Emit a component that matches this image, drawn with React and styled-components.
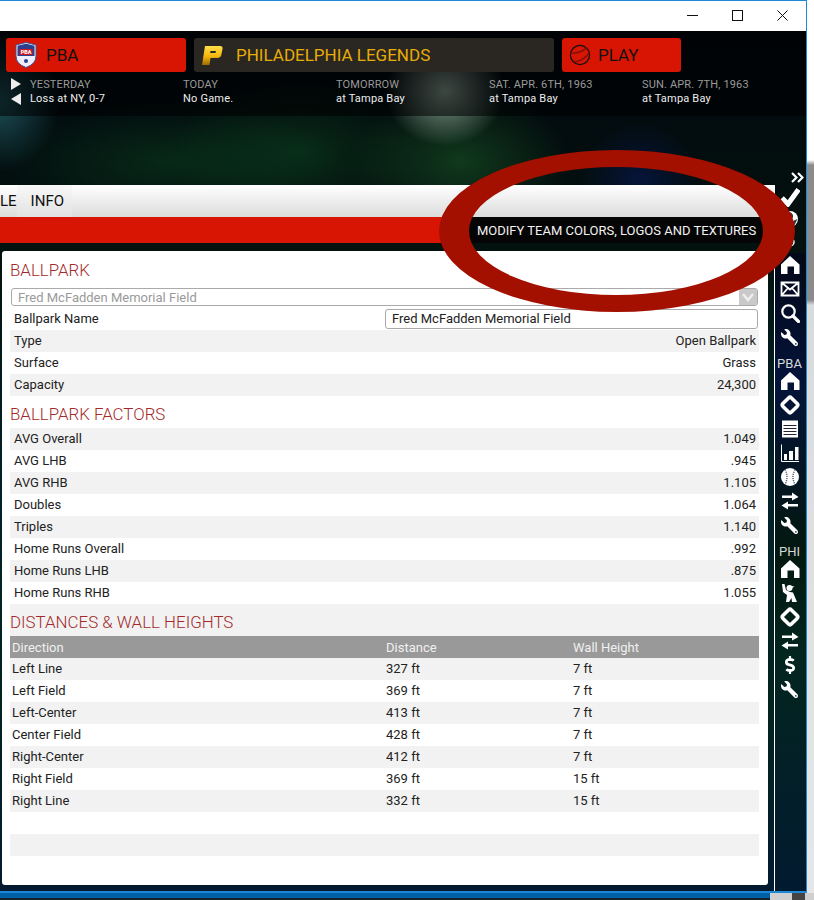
import styled, {createGlobalStyle} from 'styled-components';
import {FaWrench, FaDollarSign} from 'react-icons/fa';

const GlobalStyle = createGlobalStyle`
  html, body {
    margin: 0;
    padding: 0;
    background: #e4e4e4;
  }
  body {
    font-family: Roboto, "Liberation Sans", sans-serif;
  }
`;

const dates = [
    {label: 'YESTERDAY', value: 'Loss at NY, 0-7'},
    {label: 'TODAY', value: 'No Game.'},
    {label: 'TOMORROW', value: 'at Tampa Bay'},
    {label: 'SAT. APR. 6TH, 1963', value: 'at Tampa Bay'},
    {label: 'SUN. APR. 7TH, 1963', value: 'at Tampa Bay'},
];

const ballparkRows = [
    ['Type', 'Open Ballpark'],
    ['Surface', 'Grass'],
    ['Capacity', '24,300'],
];

const factorRows = [
    ['AVG Overall', '1.049'],
    ['AVG LHB', '.945'],
    ['AVG RHB', '1.105'],
    ['Doubles', '1.064'],
    ['Triples', '1.140'],
    ['Home Runs Overall', '.992'],
    ['Home Runs LHB', '.875'],
    ['Home Runs RHB', '1.055'],
];

const distanceRows = [
    ['Left Line', '327 ft', '7 ft'],
    ['Left Field', '369 ft', '7 ft'],
    ['Left-Center', '413 ft', '7 ft'],
    ['Center Field', '428 ft', '7 ft'],
    ['Right-Center', '412 ft', '7 ft'],
    ['Right Field', '369 ft', '15 ft'],
    ['Right Line', '332 ft', '15 ft'],
];

const Icon = ({children}) => <svg width="20" height="20" viewBox="0 0 20 20">{children}</svg>;

const HomeIcon = () => (
    <Icon><path d="M10 1 L19.5 9.5 V19 H14 V11.5 H7.5 V19 H1 V9.5 Z" fill="#fff" /></Icon>
);
const MailIcon = () => (
    <Icon>
        <path d="M1.5 3.5 H18.5 V16.5 H1.5 Z M1.5 3.5 L10 10.5 L18.5 3.5 M1.5 16.5 L8 9 M18.5 16.5 L12 9" fill="none" stroke="#fff" strokeWidth="1.8" />
    </Icon>
);
const SearchIcon = () => (
    <Icon>
        <circle cx="8.5" cy="8.5" r="6.2" fill="none" stroke="#fff" strokeWidth="2.2" />
        <path d="M13 13 L18.5 18.5" stroke="#fff" strokeWidth="3.2" strokeLinecap="round" />
    </Icon>
);
const CheckIcon = () => (
    <Icon><path d="M2 11 L8 17 L18.5 2.5" fill="none" stroke="#fff" strokeWidth="5" /></Icon>
);
const DiamondIcon = () => (
    <Icon>
        <rect x="4" y="4" width="12" height="12" rx="2" fill="none" stroke="#fff" strokeWidth="3.6" transform="rotate(45 10 10)" />
    </Icon>
);
const ListIcon = () => (
    <Icon>
        <rect x="2" y="1.5" width="16" height="17" fill="#fff" />
        <path d="M3.5 6.5 H16.5 M3.5 9.5 H16.5 M3.5 12.5 H16.5 M3.5 15.5 H16.5" stroke="#223" strokeWidth="1" />
    </Icon>
);
const ChartIcon = () => (
    <Icon>
        <path d="M1.5 1.5 V18.5 H19" fill="none" stroke="#fff" strokeWidth="1" />
        <path d="M4 11 H7 V17 H4 Z M9 8 H13 V17 H9 Z M15 4 H18.5 V17 H15 Z" fill="#fff" />
    </Icon>
);
const BallIcon = () => (
    <Icon>
        <circle cx="10" cy="10" r="9" fill="#fff" />
        <path d="M5 2.5 Q9 10 5 17.5 M15 2.5 Q11 10 15 17.5" fill="none" stroke="#556" strokeWidth="1.4" strokeDasharray="1.2 1" />
    </Icon>
);
const ArrowsIcon = () => (
    <Icon>
        <path d="M2 4.5 H12 V1.5 L18.5 6 L12 9.5 V7 H2 Z M18 13 H8 V10.5 L1.5 14.5 L8 18.5 V15.5 H18 Z" fill="#fff" />
    </Icon>
);
const PersonIcon = () => (
    <Icon>
        <circle cx="9.5" cy="5" r="3" fill="#fff" />
        <path d="M8 2.5 L14.5 3.5 L12 5 Z M2 1 L4.5 1 L6 7 L10 9 L13 9.5 L17 19 H12 L11.5 15 L9 19 H6 L7 12 L3 9 Z" fill="#fff" />
    </Icon>
);
const GlobeIcon = () => (
    <Icon>
        <circle cx="10" cy="10" r="8" fill="#fff" />
        <path d="M10 3 Q15 6 12 10 Q9 12 8 8 Z M13 12 L17.5 10 L14 17 Z" fill="#333" />
    </Icon>
);
const RingIcon = () => (
    <Icon><circle cx="10" cy="10" r="4" fill="none" stroke="#fff" strokeWidth="1.5" /></Icon>
);
const ChevronsIcon = () => (
    <svg width="13" height="11" viewBox="0 0 13 11">
        <path d="M1 1 L5.5 5.5 L1 10 M7 1 L11.5 5.5 L7 10" fill="none" stroke="#fff" strokeWidth="2.2" />
    </svg>
);

const LeagueCrest = () => (
    <svg width="22" height="26" viewBox="0 0 22 26">
        <path d="M11 .5 L21 3 V14 Q21 22 11 25.5 Q1 22 1 14 V3 Z" fill="#eef" stroke="#45558f" strokeWidth="1" />
        <path d="M2.5 3.8 L11 1.8 L19.5 3.8 V14 H2.5 Z" fill="#2c3f8c" />
        <rect x="4.5" y="7" width="13" height="6" fill="#cf1a22" />
        <text x="11" y="12" textAnchor="middle" fontFamily="Roboto" fontWeight="900" fontSize="5.4" fill="#fff">PBA</text>
        <circle cx="11" cy="19" r="2" fill="#2c3f8c" />
    </svg>
);

const TeamLogo = () => (
    <svg width="22" height="21" viewBox="0 0 22 21">
        <defs>
            <linearGradient id="teamGold" x1="0" y1="0" x2="0" y2="1">
                <stop offset="0" stopColor="#ffe04a" />
                <stop offset=".55" stopColor="#f5b50c" />
                <stop offset="1" stopColor="#9a6a06" />
            </linearGradient>
        </defs>
        <path d="M4 1 H19 Q22 1 21.5 4 L20.5 9 Q20 13 16 13 H9.5 L8.5 20 H1 Z M9.5 6 L9.2 8 H14.5 L15 6 Z" fill="url(#teamGold)" fillRule="evenodd" />
    </svg>
);

const PlayBall = () => (
    <svg width="22" height="22" viewBox="0 0 22 22">
        <circle cx="11" cy="11" r="9.6" fill="none" stroke="#111" strokeWidth="1.2" />
        <path d="M1.5 9 Q11 10 18 3.5 M5 18 Q14 17 20 9.5" fill="none" stroke="#7a1008" strokeWidth="1.3" />
    </svg>
);

const WindowIcon = ({kind}) => (
    <svg width="11" height="11" viewBox="0 0 11 11">
        {kind === 'min' && <path d="M0 5.5 H11" stroke="#111" />}
        {kind === 'max' && <rect x=".5" y=".5" width="10" height="10" fill="none" stroke="#111" />}
        {kind === 'close' && <path d="M.5 .5 L10.5 10.5 M10.5 .5 L.5 10.5" stroke="#111" />}
    </svg>
);

const SideIcons = ({items}) => items.map((item, i) => <SideSlot key={i}>{item}</SideSlot>);

export default function App() {
    return (
        <Page>
            <GlobalStyle />
            <TopArea>
                <Window>
                    <TitleBar>
                        <WindowButton><WindowIcon kind="min" /></WindowButton>
                        <WindowButton><WindowIcon kind="max" /></WindowButton>
                        <WindowButton><WindowIcon kind="close" /></WindowButton>
                    </TitleBar>
                    <Banner>
                        <HeaderPanel>
                            <MenuRow>
                                <MenuButton $width={180} $icon={40}>
                                    <LeagueCrest />
                                    <span>PBA</span>
                                </MenuButton>
                                <TeamButton><TeamLogo /><span>PHILADELPHIA LEGENDS</span></TeamButton>
                                <MenuButton $width={119} $icon={36}>
                                    <PlayBall />
                                    <span>PLAY</span>
                                </MenuButton>
                            </MenuRow>
                            <DateStrip>
                                <Pager>
                                    <PagerNext />
                                    <PagerPrev />
                                </Pager>
                                {dates.map((d) => (
                                    <DateCell key={d.label}>
                                        <DateLabel>{d.label}</DateLabel>
                                        <DateValue>{d.value}</DateValue>
                                    </DateCell>
                                ))}
                            </DateStrip>
                        </HeaderPanel>
                    </Banner>
                    <Body>
                        <Main>
                            <NavBar>
                                <NavTab>LE</NavTab>
                                <NavTab $active>INFO</NavTab>
                            </NavBar>
                            <RedBar>
                                <Tooltip>MODIFY TEAM COLORS, LOGOS AND TEXTURES</Tooltip>
                            </RedBar>
                            <Panel>
                                <Heading $first>BALLPARK</Heading>
                                <FakeSelect>
                                    Fred McFadden Memorial Field
                                    <SelectArrow>
                                        <svg width="12" height="9" viewBox="0 0 12 9">
                                            <path d="M1 1 L6 7 L11 1" fill="none" stroke="#eee" strokeWidth="2.5" />
                                        </svg>
                                    </SelectArrow>
                                </FakeSelect>
                                <Row>
                                    <span>Ballpark Name</span>
                                    <NameInput>Fred McFadden Memorial Field</NameInput>
                                </Row>
                                {ballparkRows.map(([k, v], i) => (
                                    <Row key={k} $shaded={i % 2 === 0}>
                                        <span>{k}</span>
                                        <span>{v}</span>
                                    </Row>
                                ))}
                                <Heading>BALLPARK FACTORS</Heading>
                                {factorRows.map(([k, v], i) => (
                                    <Row key={k} $shaded={i % 2 === 0}>
                                        <span>{k}</span>
                                        <span>{v}</span>
                                    </Row>
                                ))}
                                <Heading $shaded>DISTANCES &amp; WALL HEIGHTS</Heading>
                                <TableHead>
                                    <span>Direction</span>
                                    <span>Distance</span>
                                    <span>Wall Height</span>
                                </TableHead>
                                {distanceRows.map(([a, b, c], i) => (
                                    <TableRow key={a} $shaded={i % 2 === 0}>
                                        <span>{a}</span>
                                        <span>{b}</span>
                                        <span>{c}</span>
                                    </TableRow>
                                ))}
                                <TableRow />
                                <TableRow $shaded />
                            </Panel>
                        </Main>
                        <Sidebar>
                            <SideTop>
                                <SideSlot $h={20} $end><ChevronsIcon /></SideSlot>
                                <SideSlot $h={20}><CheckIcon /></SideSlot>
                                <SideSlot $h={23}><GlobeIcon /></SideSlot>
                                <SideSlot $h={23}><RingIcon /></SideSlot>
                            </SideTop>
                            <SideRest>
                                <SideIcons items={[<HomeIcon />, <MailIcon />, <SearchIcon />, <Wrench />]} />
                                <SideLabel>PBA</SideLabel>
                                <SideIcons items={[<HomeIcon />, <DiamondIcon />, <ListIcon />, <ChartIcon />, <BallIcon />, <ArrowsIcon />, <Wrench />]} />
                                <SideLabel>PHI</SideLabel>
                                <SideIcons items={[<HomeIcon />, <PersonIcon />, <DiamondIcon />, <ArrowsIcon />, <Dollar />, <Wrench />]} />
                            </SideRest>
                        </Sidebar>
                    </Body>
                    <CalloutRing viewBox="0 0 814 900" width="814" height="900">
                        <path
                            fillRule="evenodd"
                            fill="#a31000"
                            d="M439 231 a178 81 0 1 0 356 0 a178 81 0 1 0 -356 0 Z M469 231 a147 64 0 1 0 294 0 a147 64 0 1 0 -294 0 Z"
                        />
                    </CalloutRing>
                </Window>
                <DesktopEdge />
            </TopArea>
            <TaskStrip>
                <TaskBlue />
                <TaskLight />
                <TaskDark />
                <TaskEnd />
            </TaskStrip>
        </Page>
    );
}

const Page = styled.div`
  width: 814px;
  height: 900px;
  overflow: hidden;
  display: flex;
  flex-direction: column;
`;

const TopArea = styled.div`
  display: flex;
  height: 893px;
`;

const Window = styled.div`
  position: relative;
  box-sizing: border-box;
  width: 807px;
  height: 893px;
  display: flex;
  flex-direction: column;
  border-top: 1px solid #1e88d8;
  border-right: 1px solid #1e88d8;
  border-bottom: 2px solid #1e88d8;
  overflow: hidden;
  background:
    radial-gradient(ellipse 60px 55px at 445px 90px, rgba(150, 175, 160, .9), transparent),
    radial-gradient(ellipse 170px 60px at 170px 160px, rgba(15, 90, 40, .35), transparent),
    radial-gradient(ellipse 130px 70px at 300px 150px, rgba(15, 85, 35, .4), transparent),
    radial-gradient(ellipse 110px 70px at 460px 160px, rgba(30, 100, 40, .5), transparent),
    radial-gradient(ellipse 60px 60px at 640px 180px, rgba(10, 25, 100, .5), transparent),
    radial-gradient(ellipse 60px 70px at 0 100px, rgba(40, 110, 120, .7), transparent),
    linear-gradient(180deg, #02060e 0, #03120f 250px, #02222a 500px, #03231f 700px, #021a30 890px);
`;

const DesktopEdge = styled.div`
  width: 7px;
  height: 893px;
  background: linear-gradient(180deg, #fff 0, #fff 160px, #8b8b8b 165px, #8b8b8b 300px, #dadada 305px, #e6e6e6 893px);
`;

const TitleBar = styled.div`
  flex: none;
  height: 30px;
  background: #fff;
  display: flex;
  justify-content: flex-end;
  align-items: center;
  padding-right: 1px;
`;

const WindowButton = styled.div`
  width: 45px;
  height: 30px;
  display: flex;
  align-items: center;
  justify-content: center;
  margin-top: -2px;
`;

const Banner = styled.div`
  flex: none;
  height: 154px;
`;

const HeaderPanel = styled.div`
  box-sizing: border-box;
  height: 85px;
  padding: 7px 6px 0;
  background: rgba(0, 0, 0, .55);
`;

const MenuRow = styled.div`
  display: flex;
  gap: 8px;
`;

const MenuButton = styled.div`
  box-sizing: border-box;
  width: ${props => props.$width}px;
  height: 34px;
  border-radius: 3px;
  background: #d81402;
  color: #111;
  font-size: 17px;
  display: grid;
  grid-template-columns: ${props => props.$icon}px 1fr;
  align-items: center;
  justify-items: center;
  & > span {
    justify-self: start;
  }
`;

const TeamButton = styled.div`
  box-sizing: border-box;
  width: 360px;
  height: 34px;
  padding-left: 7px;
  border-radius: 3px;
  background: #2a2723;
  color: #e8ac06;
  font-size: 17px;
  display: flex;
  align-items: center;
  gap: 13px;
`;

const DateStrip = styled.div`
  display: flex;
  margin-top: 6px;
`;

const Pager = styled.div`
  width: 24px;
  padding-left: 5px;
  box-sizing: border-box;
  display: flex;
  flex-direction: column;
  gap: 3px;
`;

const PagerNext = styled.div`
  width: 0;
  height: 0;
  border-top: 6px solid transparent;
  border-bottom: 6px solid transparent;
  border-left: 10px solid #eee;
`;

const PagerPrev = styled.div`
  width: 0;
  height: 0;
  border-top: 6px solid transparent;
  border-bottom: 6px solid transparent;
  border-right: 10px solid #eee;
`;

const DateCell = styled.div`
  width: 153px;
  display: flex;
  flex-direction: column;
  gap: 1px;
  font-size: 11px;
  line-height: 13px;
`;

const DateLabel = styled.div`
  color: #9a9a9a;
  letter-spacing: .15px;
`;

const DateValue = styled.div`
  color: #eee;
  letter-spacing: .2px;
`;

const Body = styled.div`
  flex: 1;
  display: flex;
  align-items: flex-start;
`;

const Main = styled.div`
  width: 775px;
  display: flex;
  flex-direction: column;
`;

const NavBar = styled.div`
  height: 32px;
  display: flex;
  background: linear-gradient(180deg, #fff 0, #dcdcdc 100%);
`;

const NavTab = styled.div`
  flex: none;
  box-sizing: border-box;
  display: flex;
  align-items: center;
  font-size: 15px;
  color: #111;
  padding: ${props => props.$active ? '0 8px 0 14px' : '0'};
  background: ${props => props.$active ? 'linear-gradient(180deg, #f8f8f8 0, #e2e2e2 100%)' : 'transparent'};
`;

const RedBar = styled.div`
  position: relative;
  height: 26px;
  background: #d81402;
`;

const Tooltip = styled.div`
  position: absolute;
  top: 0;
  left: 468px;
  width: 296px;
  height: 26px;
  box-sizing: border-box;
  padding: 1px 0 0 9px;
  display: flex;
  align-items: center;
  background: #050505;
  color: #f2f2f2;
  font-size: 13px;
  white-space: nowrap;
`;

const Panel = styled.div`
  box-sizing: border-box;
  margin: 8px 0 0 2px;
  width: 766px;
  height: 634px;
  padding: 1px 9px 0 8px;
  background: #fff;
  border-radius: 3px;
  font-size: 13px;
  color: #222;
`;

const Heading = styled.div`
  box-sizing: border-box;
  height: 32px;
  display: flex;
  align-items: center;
  padding-top: 4px;
  margin-bottom: ${props => props.$first ? '4px' : '0'};
  font-size: 16.9px;
  font-weight: 300;
  color: #a32a2a;
  background: ${props => props.$shaded ? '#f2f2f2' : 'transparent'};
`;

const FakeSelect = styled.div`
  position: relative;
  box-sizing: border-box;
  height: 18px;
  margin: 0 1px 2px;
  width: 747px;
  padding-left: 6px;
  display: flex;
  align-items: center;
  border: 1px solid #aaa;
  border-radius: 3px;
  color: #9a9a9a;
`;

const SelectArrow = styled.div`
  position: absolute;
  top: 0;
  right: 0;
  width: 18px;
  height: 16px;
  display: flex;
  align-items: center;
  justify-content: center;
  background: #c9c9c9;
`;

const Row = styled.div`
  box-sizing: border-box;
  height: 22px;
  padding: 0 3px 2px 4px;
  display: flex;
  align-items: center;
  justify-content: space-between;
  background: ${props => props.$shaded ? '#f2f2f2' : 'transparent'};
`;

const NameInput = styled.div`
  box-sizing: border-box;
  flex: none;
  align-self: flex-start;
  width: 373px;
  height: 20px;
  margin: 1px -2px 0 0;
  padding: 0 0 2px 6px;
  display: flex;
  align-items: center;
  border: 1px solid #aaa;
  border-radius: 3px;
  background: #fff;
`;

const TableHead = styled.div`
  box-sizing: border-box;
  height: 22px;
  padding-left: 2px;
  display: grid;
  grid-template-columns: 374px 187px 1fr;
  align-items: center;
  background: #999;
  color: #f0f0f0;
`;

const TableRow = styled.div`
  box-sizing: border-box;
  height: 22px;
  padding: 0 0 2px 2px;
  display: grid;
  grid-template-columns: 374px 187px 1fr;
  align-items: center;
  background: ${props => props.$shaded ? '#f2f2f2' : 'transparent'};
`;

const Sidebar = styled.div`
  width: 30px;
  margin-top: -18px;
  display: flex;
  flex-direction: column;
`;

const SideTop = styled.div`
  display: flex;
  flex-direction: column;
  padding-right: 1px;
`;

const SideRest = styled.div`
  height: 640px;
  margin-left: -1px;
  padding-right: 1px;
  display: flex;
  flex-direction: column;
  border-left: 1px solid #fff;
  background: linear-gradient(180deg, #020817 0, #04133a 130px, #03180f 300px, #03251f 400px, #021a30 640px);
`;

const SideSlot = styled.div`
  flex: none;
  height: ${props => props.$h || 24}px;
  display: flex;
  align-items: center;
  justify-content: ${props => props.$end ? 'flex-end' : 'center'};
`;

const SideLabel = styled.div`
  flex: none;
  box-sizing: border-box;
  height: 20px;
  padding-top: 9px;
  text-align: center;
  line-height: 12px;
  font-size: 13px;
  color: #d8d8d8;
`;

const Wrench = styled(FaWrench).attrs({size: 17, color: '#fff'})`
  transform: scaleX(-1);
`;

const Dollar = styled(FaDollarSign).attrs({size: 18, color: '#fff'})``;

const CalloutRing = styled.svg`
  position: absolute;
  top: -1px;
  left: 0;
  pointer-events: none;
`;

const TaskStrip = styled.div`
  display: flex;
  height: 7px;
`;

const TaskBlue = styled.div`
  width: 770px;
  background: linear-gradient(180deg, #0060a5 0, #0060a5 5px, #14202c 5px);
`;

const TaskLight = styled.div`
  width: 22px;
  background: #cfcfcf;
`;

const TaskDark = styled.div`
  width: 13px;
  background: #444;
`;

const TaskEnd = styled.div`
  flex: 1;
  background: #cfcfcf;
`;
